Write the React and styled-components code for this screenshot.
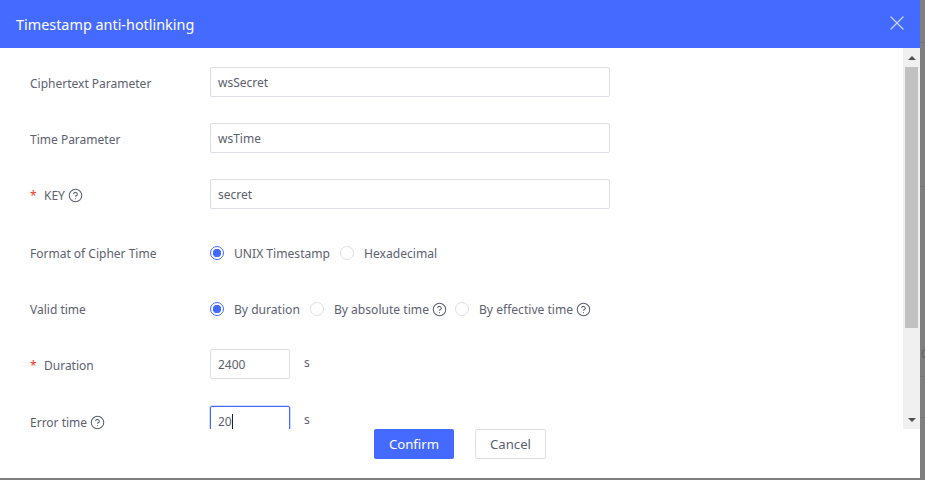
import React from 'react';
import styled, { createGlobalStyle } from 'styled-components';
import { X, CircleHelp } from 'lucide-react';

const GlobalStyle = createGlobalStyle`
  html, body {
    margin: 0;
    padding: 0;
    width: 925px;
    height: 480px;
    overflow: hidden;
    background: #7f7f7f;
    font-family: "Noto Sans", "Open Sans", sans-serif;
  }
`;

const Field = ({ value, short, focused }) => (
  <FieldWrap $short={short}>
    <Input value={value} readOnly $focused={focused} />
    {focused && <Caret />}
  </FieldWrap>
);

const Radio = ({ label, checked, help }) => (
  <RadioItem>
    <RadioCircle $checked={checked} />
    <span>{label}</span>
    {help && <Help />}
  </RadioItem>
);

const Help = () => (
  <HelpWrap>
    <CircleHelp size={15} strokeWidth={1.7} />
  </HelpWrap>
);

const App = () => (
  <Page>
    <GlobalStyle />
    <Dialog>
      <Header>
        <Title>Timestamp anti-hotlinking</Title>
        <CloseButton type="button">
          <X size={24} strokeWidth={1.3} />
        </CloseButton>
      </Header>
      <BodyWrap>
        <Body>
          <Row>
            <Label>Ciphertext Parameter</Label>
            <Field value="wsSecret" />
          </Row>
          <Row>
            <Label>Time Parameter</Label>
            <Field value="wsTime" />
          </Row>
          <Row>
            <Label>
              <Star>*</Star>KEY
              <Help />
            </Label>
            <Field value="secret" />
          </Row>
          <RadioRow>
            <Label>Format of Cipher Time</Label>
            <RadioGroup>
              <Radio label="UNIX Timestamp" checked />
              <Radio label="Hexadecimal" />
            </RadioGroup>
          </RadioRow>
          <RadioRow $height={58}>
            <Label>Valid time</Label>
            <RadioGroup>
              <Radio label="By duration" checked />
              <Radio label="By absolute time" help />
              <Radio label="By effective time" help />
            </RadioGroup>
          </RadioRow>
          <Row $height={57}>
            <Label>
              <Star>*</Star>Duration
            </Label>
            <Field value="2400" short />
            <Unit>s</Unit>
          </Row>
          <Row>
            <Label>
              Error time
              <Help />
            </Label>
            <Field value="20" short focused />
            <Unit>s</Unit>
          </Row>
        </Body>
        <Scrollbar>
          <ArrowButton>
            <ArrowUp />
          </ArrowButton>
          <Track>
            <Thumb />
          </Track>
          <ArrowButton>
            <ArrowDown />
          </ArrowButton>
        </Scrollbar>
      </BodyWrap>
      <Footer>
        <PrimaryButton type="button">Confirm</PrimaryButton>
        <DefaultButton type="button">Cancel</DefaultButton>
      </Footer>
    </Dialog>
    {/* bit of the page behind the mask */}
    <Backdrop>
      <Hairline $top={42} />
      <Hairline $top={143} />
      <BackdropText>C</BackdropText>
      <Hairline $top={16} />
      <Hairline $top={40} />
    </Backdrop>
  </Page>
);

export default App;

const Page = styled.div`
  display: flex;
  align-items: flex-start;
  width: 925px;
  height: 480px;
`;

const Dialog = styled.div`
  flex: 0 0 920px;
  height: 478px;
  background: #fff;
  display: flex;
  flex-direction: column;
  overflow: hidden;
`;

const Backdrop = styled.div`
  flex: 1;
  height: 480px;
  display: flex;
  flex-direction: column;
  overflow: hidden;
`;

const Hairline = styled.div`
  flex: 0 0 1px;
  margin-top: ${({ $top }) => $top}px;
  background: #767676;
`;

const BackdropText = styled.span`
  margin-top: 161px;
  padding-left: 1px;
  font-size: 12px;
  line-height: 12px;
  color: #5f5f5f;
`;

const Header = styled.header`
  flex: 0 0 48px;
  background: #456aff;
  display: flex;
  align-items: center;
  justify-content: space-between;
  padding: 0 11px 0 16px;
`;

const Title = styled.h1`
  margin: 0;
  font-size: 14.4px;
  font-weight: 400;
  color: #fff;
`;

const CloseButton = styled.button`
  display: flex;
  padding: 0;
  margin-bottom: 2px;
  border: none;
  background: none;
  color: #c6d2ff;
`;

const BodyWrap = styled.div`
  flex: 0 0 381px;
  display: flex;
  overflow: hidden;
`;

const Body = styled.div`
  flex: 1;
  padding: 19px 0 0 30px;
`;

const Label = styled.label`
  flex: 0 0 180px;
  display: flex;
  align-items: center;
  height: 30px;
  padding-top: 2px;
  box-sizing: border-box;
  font-size: 12px;
  color: #5c6170;
`;

const Row = styled.div`
  display: flex;
  align-items: flex-start;
  height: ${({ $height }) => $height || 56}px;
`;

const RadioRow = styled.div`
  display: flex;
  align-items: flex-start;
  height: ${({ $height }) => $height || 56}px;
  padding-top: 3px;
  box-sizing: border-box;

  ${Label} {
    padding-top: 0;
  }
`;

const Star = styled.span`
  width: 14px;
  color: #f5391c;
`;

const HelpWrap = styled.span`
  display: inline-flex;
  margin: 0 -2px 0 3px;
  color: #5c6170;
`;

const FieldWrap = styled.div`
  position: relative;
  width: ${({ $short }) => ($short ? 80 : 400)}px;
  height: 30px;
`;

const Input = styled.input`
  width: 100%;
  height: 100%;
  box-sizing: border-box;
  padding: 0 7px;
  outline: none;
  border: 1px solid ${({ $focused }) => ($focused ? '#456aff' : '#dcdfe6')};
  border-radius: 2px;
  box-shadow: ${({ $focused }) => ($focused ? '0 0 0 1px #cfd9ff' : 'none')};
  font-family: inherit;
  font-size: 12px;
  color: #5c6170;
`;

const Caret = styled.span`
  position: absolute;
  left: 22px;
  top: 8px;
  width: 1px;
  height: 15px;
  background: #222;
`;

const Unit = styled.span`
  margin-left: 14px;
  line-height: 28px;
  font-size: 12px;
  color: #5c6170;
`;

const RadioGroup = styled.div`
  display: flex;
  align-items: center;
  height: 30px;
  gap: 10px;
`;

const RadioItem = styled.div`
  display: flex;
  align-items: center;
  font-size: 12.1px;
  color: #5c6170;
`;

const RadioCircle = styled.span`
  width: 14px;
  height: 14px;
  margin-right: 10px;
  border-radius: 50%;
  box-sizing: border-box;
  border: 1px solid ${({ $checked }) => ($checked ? '#456aff' : '#dcdfe6')};
  background: ${({ $checked }) =>
    $checked ? 'radial-gradient(circle, #456aff 0 4px, #fff 4.5px)' : '#fff'};
`;

const Scrollbar = styled.div`
  flex: 0 0 17px;
  display: flex;
  flex-direction: column;
  background: #f0f0f0;
`;

const ArrowButton = styled.div`
  flex: 0 0 19px;
  display: flex;
  align-items: center;
  justify-content: center;
`;

const ArrowUp = styled.span`
  border-left: 4px solid transparent;
  border-right: 4px solid transparent;
  border-bottom: 4px solid #505050;
`;

const ArrowDown = styled.span`
  border-left: 4px solid transparent;
  border-right: 4px solid transparent;
  border-top: 4px solid #505050;
`;

const Track = styled.div`
  flex: 1;
  padding: 0 2px;
`;

const Thumb = styled.div`
  height: 261px;
  background: #c1c1c1;
`;

const Footer = styled.footer`
  flex: 1;
  display: flex;
  justify-content: center;
  align-items: flex-start;
  gap: 21px;
`;

const PrimaryButton = styled.button`
  width: 80px;
  height: 30px;
  padding: 0;
  border: none;
  border-radius: 2px;
  background: #456aff;
  color: #fff;
  font-family: inherit;
  font-size: 13.2px;
`;

const DefaultButton = styled.button`
  width: 71px;
  height: 30px;
  padding: 0;
  border: 1px solid #dcdfe6;
  border-radius: 2px;
  background: #fff;
  color: #5c6170;
  font-family: inherit;
  font-size: 13.2px;
`;
